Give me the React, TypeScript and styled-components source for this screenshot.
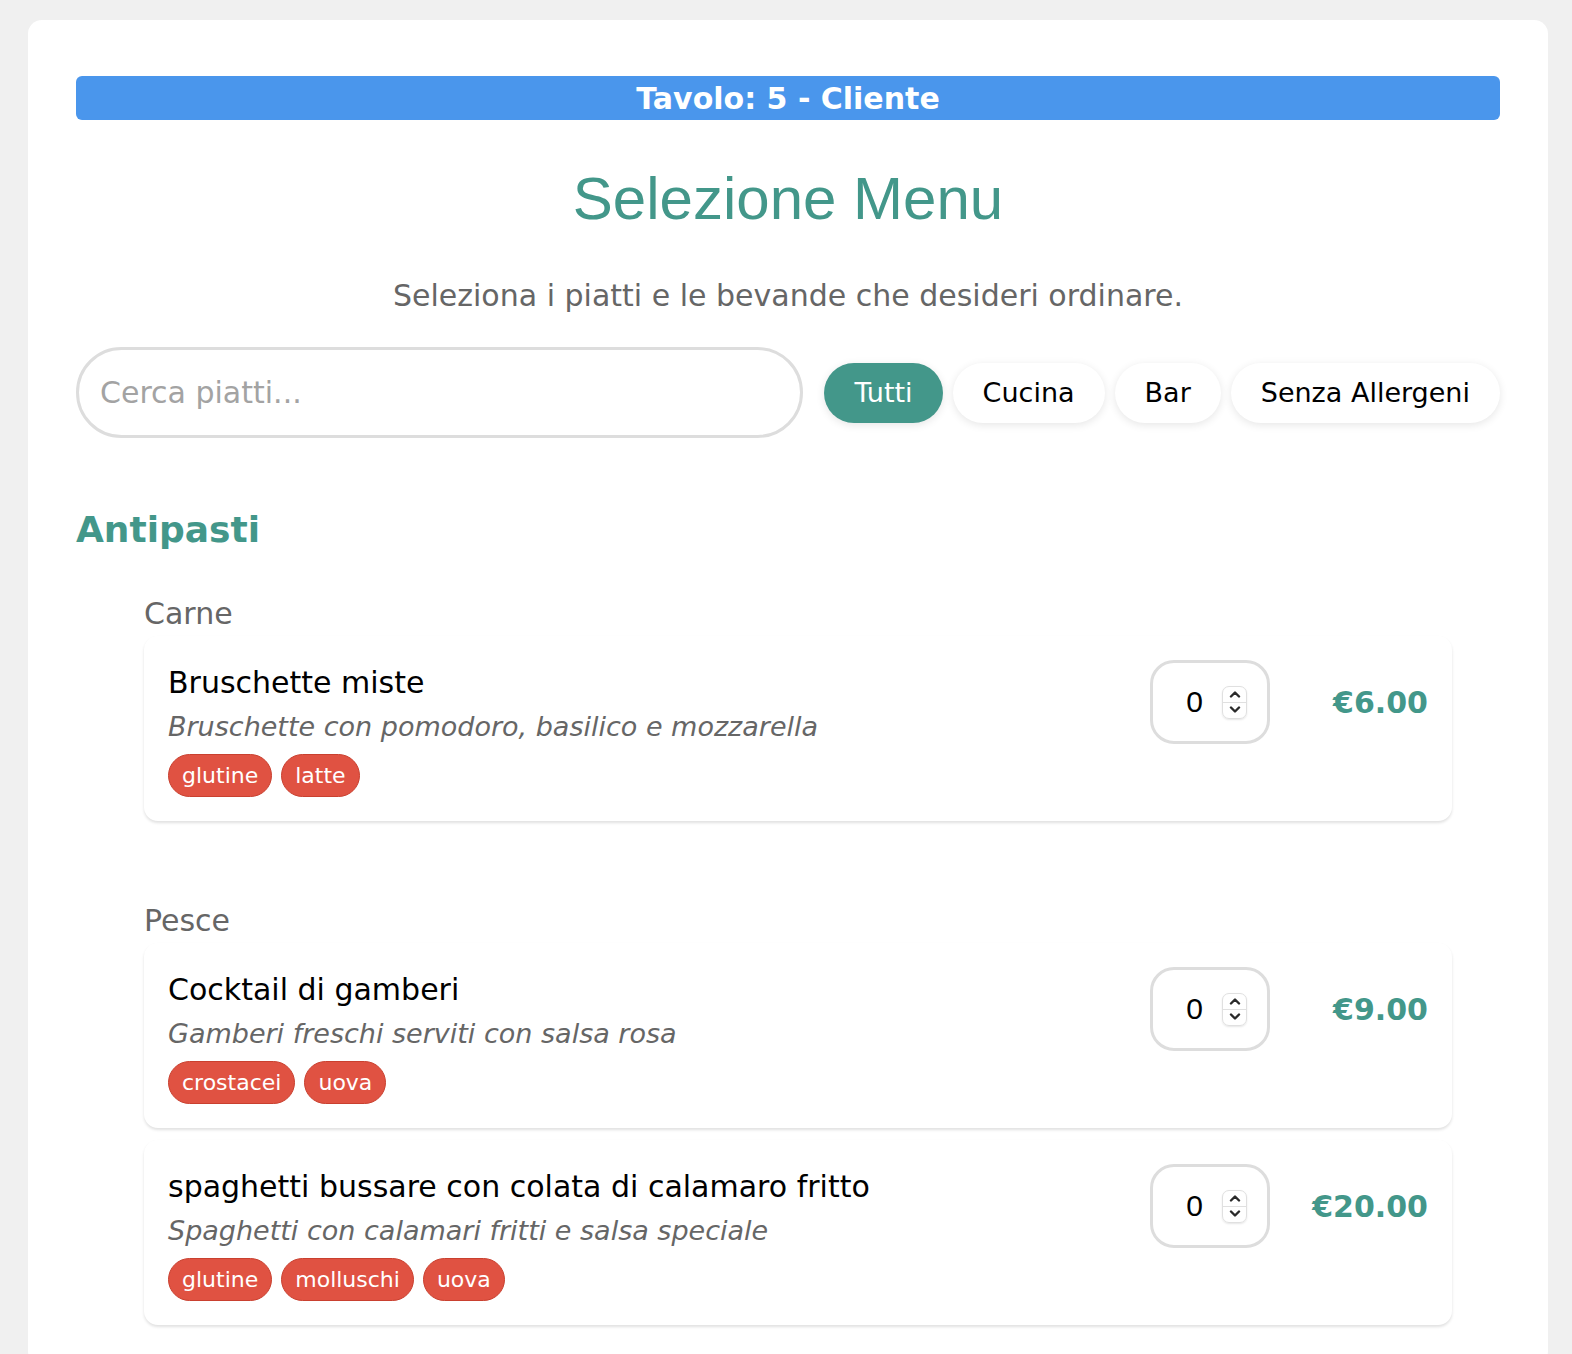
import React from 'react'
import styled, { createGlobalStyle } from 'styled-components'

const GlobalStyle = createGlobalStyle`
  body {
    margin: 0;
    background: #f0f0f0;
    font-family: "DejaVu Sans", Verdana, sans-serif;
    color: #000;
  }
`

const TEAL = '#43978a'

const Container = styled.div`
  width: 1520px;
  margin: 20px 0 0 28px;
  background: #fff;
  border-radius: 14px;
  padding: 56px 48px 40px;
  box-sizing: border-box;
`

const TableBar = styled.div`
  background: #4a96ec;
  color: #fff;
  border-radius: 6px;
  height: 44px;
  display: flex;
  align-items: center;
  justify-content: center;
  font-weight: bold;
  font-size: 30px;
`

const Title = styled.h1`
  margin: 44px 0 0;
  text-align: center;
  font-family: "Liberation Sans", Arial, sans-serif;
  font-weight: normal;
  font-size: 60px;
  color: ${TEAL};
`

const Subtitle = styled.p`
  margin: 45px 0 0;
  text-align: center;
  color: #666;
  font-size: 30px;
`

const Toolbar = styled.div`
  display: flex;
  align-items: center;
  gap: 21px;
  margin-top: 34px;
`

const Search = styled.input`
  flex: 1;
  min-width: 0;
  height: 91px;
  box-sizing: border-box;
  border: 3px solid #ddd;
  border-radius: 46px;
  padding: 0 21px;
  font-family: inherit;
  font-size: 30px;
  outline: none;
  &::placeholder {
    color: #a3a3a3;
  }
`

const Filters = styled.div`
  display: flex;
  gap: 10px;
`

const FilterButton = styled.button<{ $active?: boolean }>`
  height: 60px;
  padding: 0 30px;
  border: none;
  border-radius: 30px;
  font-family: inherit;
  font-size: 27px;
  background: ${p => (p.$active ? TEAL : '#fff')};
  color: ${p => (p.$active ? '#fff' : '#000')};
  box-shadow: 0 2px 8px rgba(0, 0, 0, 0.1);
  cursor: pointer;
`

const CategoryTitle = styled.h2`
  margin: 71px 0 0;
  color: ${TEAL};
  font-size: 36px;
  font-weight: bold;
`

const Group = styled.section`
  margin: 0 48px 0 68px;
  padding-top: 46px;
  & + & {
    padding-top: 82px;
  }
`

const GroupTitle = styled.h3`
  margin: 0 0 5px;
  font-weight: normal;
  color: #666;
  font-size: 30px;
`

const ItemCard = styled.div`
  display: flex;
  align-items: flex-start;
  justify-content: space-between;
  padding: 24px;
  border-radius: 14px;
  background: #fff;
  box-shadow: 0 2px 3px rgba(0, 0, 0, 0.12);
  & + & {
    margin-top: 12px;
  }
`

const ItemInfo = styled.div`
  display: flex;
  flex-direction: column;
`

const ItemName = styled.div`
  font-size: 30px;
  line-height: 46px;
`

const ItemDesc = styled.div`
  font-style: italic;
  color: #666;
  font-size: 27px;
  line-height: 42px;
`

const Tags = styled.div`
  display: flex;
  gap: 9px;
  margin-top: 6px;
`

const Tag = styled.span`
  display: inline-flex;
  align-items: center;
  height: 43px;
  box-sizing: border-box;
  padding: 0 13px;
  border-radius: 22px;
  background: #e05242;
  border: 1.5px solid #c9402f;
  color: #fff;
  font-size: 22px;
`

const Controls = styled.div`
  display: flex;
  align-items: center;
`

const Qty = styled.div`
  width: 120px;
  height: 84px;
  box-sizing: border-box;
  border: 3px solid #ddd;
  border-radius: 24px;
  display: flex;
  align-items: center;
  justify-content: flex-end;
  padding-right: 20px;
  gap: 19px;
  font-family: "Liberation Sans", Arial, sans-serif;
  font-size: 30px;
`

const Spinner = styled.span`
  display: flex;
  flex-direction: column;
  width: 25px;
  height: 33px;
  box-sizing: border-box;
  border: 1px solid #e0e0e0;
  border-radius: 7px;
  box-shadow: 0 1px 2px rgba(0, 0, 0, 0.1);
  overflow: hidden;
  & > span {
    flex: 1;
    display: flex;
    align-items: center;
    justify-content: center;
  }
  & > span + span {
    border-top: 1px solid #e0e0e0;
  }
`

const Price = styled.div`
  width: 120px;
  margin-left: 38px;
  text-align: right;
  color: ${TEAL};
  font-weight: bold;
  font-size: 30px;
`

const Chevron = ({ up }: { up?: boolean }) => (
  <svg width="12" height="8" viewBox="0 0 12 8">
    <path
      d={up ? 'M2 6.5 L6 2.5 L10 6.5' : 'M2 1.5 L6 5.5 L10 1.5'}
      fill="none"
      stroke="#2a2a2a"
      strokeWidth="2.4"
      strokeLinecap="round"
      strokeLinejoin="round"
    />
  </svg>
)

type Item = { name: string; desc: string; tags: string[]; price: string }

const groups: { title: string; items: Item[] }[] = [
  {
    title: 'Carne',
    items: [
      {
        name: 'Bruschette miste',
        desc: 'Bruschette con pomodoro, basilico e mozzarella',
        tags: ['glutine', 'latte'],
        price: '€6.00',
      },
    ],
  },
  {
    title: 'Pesce',
    items: [
      {
        name: 'Cocktail di gamberi',
        desc: 'Gamberi freschi serviti con salsa rosa',
        tags: ['crostacei', 'uova'],
        price: '€9.00',
      },
      {
        name: 'spaghetti bussare con colata di calamaro fritto',
        desc: 'Spaghetti con calamari fritti e salsa speciale',
        tags: ['glutine', 'molluschi', 'uova'],
        price: '€20.00',
      },
    ],
  },
]

const filters = ['Tutti', 'Cucina', 'Bar', 'Senza Allergeni']

const App = () => {
  return (
    <>
      <GlobalStyle />
      <Container>
        <TableBar>Tavolo: 5 - Cliente</TableBar>
        <Title>Selezione Menu</Title>
        <Subtitle>Seleziona i piatti e le bevande che desideri ordinare.</Subtitle>
        <Toolbar>
          <Search placeholder="Cerca piatti..." />
          <Filters>
            {filters.map((f, i) => (
              <FilterButton key={f} $active={i === 0}>{f}</FilterButton>
            ))}
          </Filters>
        </Toolbar>
        <CategoryTitle>Antipasti</CategoryTitle>
        {groups.map(g => (
          <Group key={g.title}>
            <GroupTitle>{g.title}</GroupTitle>
            {g.items.map(item => (
              <ItemCard key={item.name}>
                <ItemInfo>
                  <ItemName>{item.name}</ItemName>
                  <ItemDesc>{item.desc}</ItemDesc>
                  <Tags>
                    {item.tags.map(t => <Tag key={t}>{t}</Tag>)}
                  </Tags>
                </ItemInfo>
                <Controls>
                  <Qty>
                    0
                    <Spinner>
                      <span><Chevron up /></span>
                      <span><Chevron /></span>
                    </Spinner>
                  </Qty>
                  <Price>{item.price}</Price>
                </Controls>
              </ItemCard>
            ))}
          </Group>
        ))}
      </Container>
    </>
  )
}

export default App
